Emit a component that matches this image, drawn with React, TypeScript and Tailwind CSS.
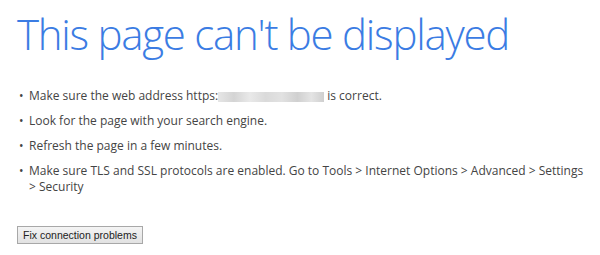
export default function App() {
  const items = [
    "Look for the page with your search engine.",
    "Refresh the page in a few minutes.",
    "Make sure TLS and SSL protocols are enabled. Go to Tools > Internet Options > Advanced > Settings > Security",
  ];
  return (
    <div className="w-[600px] h-[255px] bg-white overflow-hidden pl-[17px] pt-[6px]">
      <h1 className="text-[42px] leading-[56px] font-light text-[#3b7ce3] tracking-[-1.25px]" style={{ fontFamily: '"Open Sans", sans-serif' }}>
        This page can't be displayed
      </h1>
      <ul className="mt-[26px] w-[575px] text-[12px] leading-[16px] text-[#444]" style={{ fontFamily: '"Open Sans", sans-serif' }}>
        <li className="flex mb-[9px]">
          <span className="w-[12px] shrink-0 pl-[2px]">•</span>
          <span>
            Make sure the web address https:
            <span className="inline-block align-middle w-[106px] h-[10px] bg-[linear-gradient(90deg,#e6e6e6_0%,#d4d4d4_15%,#e9e9e9_30%,#dadada_45%,#e2e2e2_60%,#d0d0d0_75%,#e4e4e4_88%,#cfcfcf_100%)]" />{" "}
            is correct.
          </span>
        </li>
        {items.map((t, i) => (
          <li key={i} className="flex mb-[9px]">
            <span className="w-[12px] shrink-0 pl-[2px]">•</span>
            <span>{t}</span>
          </li>
        ))}
      </ul>
      <button
        className="mt-[22px] h-[18px] w-[126px] border border-[#a8a8a8] bg-[linear-gradient(#f4f4f4,#e2e2e2)] text-[10.5px] leading-[14px] text-[#222]"
        style={{ fontFamily: '"Liberation Sans", Arial, sans-serif' }}
      >
        Fix connection problems
      </button>
    </div>
  );
}
